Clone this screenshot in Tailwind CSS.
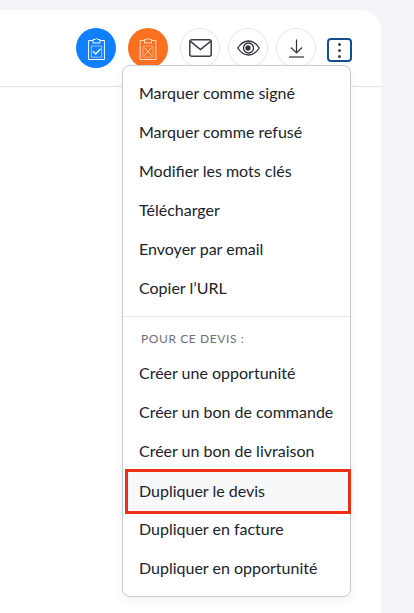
<!DOCTYPE html>
<html lang="fr">
<head>
  <meta charset="UTF-8">
  <title>Devis</title>
  <script src="https://cdn.jsdelivr.net/npm/@tailwindcss/browser@4"></script>
</head>
<body class="h-[613px] overflow-hidden bg-[#f4f5fa] font-['Lato','Noto_Sans',sans-serif] text-[#20232b]">

<!-- Card -->
<main class="relative mt-[10px] h-[603px] w-[381px] rounded-tr-[20px] bg-white">
  <header class="flex h-[77px] items-start justify-end pt-[18px] pr-[29px] border-b border-[#e2e4ea]">
    <button class="flex h-10 w-10 items-center justify-center rounded-full bg-[#0f7fff]">
      <svg class="h-6 w-[17px]" viewBox="0 0 17 24" fill="none" stroke="#fff" stroke-width="1">
        <path d="M5 4.5H.6v19h15.8v-19H12"/>
        <path d="M5 7V3.5h2.2a1.4 1.4 0 0 1 2.6 0H12V7z"/>
        <path d="M3.4 10h10.2v11.2H3.4z" stroke-width="0.7" stroke-opacity="0.8"/>
        <path d="M5 15.2l2.8 2.8 4.6-5" stroke-width="1.3"/>
      </svg>
    </button>
    <button class="ml-3 flex h-10 w-10 items-center justify-center rounded-full bg-[#f97021]">
      <svg class="h-6 w-[18px]" viewBox="0 0 17 24" fill="none" stroke="#ffdcc8" stroke-width="1">
        <path d="M5 4.5H.6v19h15.8v-19H12"/>
        <path d="M5 7V3.5h2.2a1.4 1.4 0 0 1 2.6 0H12V7z"/>
        <path d="M3.4 10h10.2v11.2H3.4z" stroke-width="0.7" stroke-opacity="0.7"/>
        <path d="M4.6 11.4l7.8 8.4M12.4 11.4l-7.8 8.4" stroke-width="1"/>
      </svg>
    </button>
    <button class="ml-3 flex h-10 w-10 items-center justify-center rounded-full border border-[#e4e5e8] bg-white">
      <svg class="h-[18px] w-[23px]" viewBox="0 0 23 18" fill="none" stroke="#3a3d47" stroke-width="1.5">
        <rect x="0.8" y="0.8" width="21.4" height="16.4" rx="2"/>
        <path d="M1.2 2.2L11.5 10.5l10.3-8.3"/>
      </svg>
    </button>
    <button class="ml-2 flex h-10 w-10 items-center justify-center rounded-full border border-[#e4e5e8] bg-white">
      <svg class="h-4 w-[23px]" viewBox="0 0 23 16" fill="none" stroke="#2f323b" stroke-width="1.3">
        <path d="M0.8 8C3.8 3.4 7.5 1 11.5 1S19.2 3.4 22.2 8C19.2 12.6 15.5 15 11.5 15S3.8 12.6 0.8 8z"/>
        <circle cx="11.5" cy="8" r="5"/>
        <circle cx="11" cy="8" r="2" fill="#2f323b"/>
      </svg>
    </button>
    <button class="ml-2 flex h-10 w-10 items-center justify-center rounded-full border border-[#e4e5e8] bg-white">
      <svg class="h-[19px] w-[15px]" viewBox="0 0 15 19" fill="none" stroke="#2f323b" stroke-width="1.2">
        <path d="M7.5 0.5V14M2 8.5L7.5 14 13 8.5"/>
        <path d="M0 18h15"/>
      </svg>
    </button>
    <button class="mt-[10px] ml-[11px] flex h-[24px] w-[25px] flex-col items-center justify-center gap-[3px] rounded-[4px] border-2 border-[#12508f] bg-white">
      <span class="h-[3px] w-[3px] rounded-full bg-[#3a3d47]"></span>
      <span class="h-[3px] w-[3px] rounded-full bg-[#3a3d47]"></span>
      <span class="h-[3px] w-[3px] rounded-full bg-[#3a3d47]"></span>
    </button>
  </header>

  <!-- Menu -->
  <div class="absolute top-[55px] left-[122px] w-[229px] rounded-lg border border-[#c9cbd2] bg-white pt-[7px] pb-[9px] text-[16px] whitespace-nowrap shadow-[0_4px_12px_rgba(30,35,60,0.06)]">
    <ul class="border-b border-[#e2e4ea] pb-[9px]">
      <li class="flex h-[39px] items-center pl-4">Marquer comme signé</li>
      <li class="flex h-[39px] items-center pl-4">Marquer comme refusé</li>
      <li class="flex h-[39px] items-center pl-4">Modifier les mots clés</li>
      <li class="flex h-[39px] items-center pl-4">Télécharger</li>
      <li class="flex h-[39px] items-center pl-4">Envoyer par email</li>
      <li class="flex h-[39px] items-center pl-4">Copier l’URL</li>
    </ul>
    <div class="flex h-[36px] items-end px-[18px] pb-[5px] text-[12px] tracking-[0.6px] text-[#6d7079]">POUR CE DEVIS :</div>
    <ul>
      <li class="flex h-[39px] items-center pl-4">Créer une opportunité</li>
      <li class="flex h-[39px] items-center pl-4">Créer un bon de commande</li>
      <li class="flex h-[39px] items-center pl-4">Créer un bon de livraison</li>
      <li class="relative flex h-[39px] items-center bg-[#f7f8fa] pt-[2px] pl-4">
        Dupliquer le devis
        <span class="absolute -top-[1px] -right-[1px] -bottom-[5px] left-[2px] border-[3px] border-[#ee2f14]"></span>
      </li>
      <li class="flex h-[39px] items-center pl-4">Dupliquer en facture</li>
      <li class="flex h-[39px] items-center pl-4">Dupliquer en opportunité</li>
    </ul>
  </div>
</main>

</body>
</html>
